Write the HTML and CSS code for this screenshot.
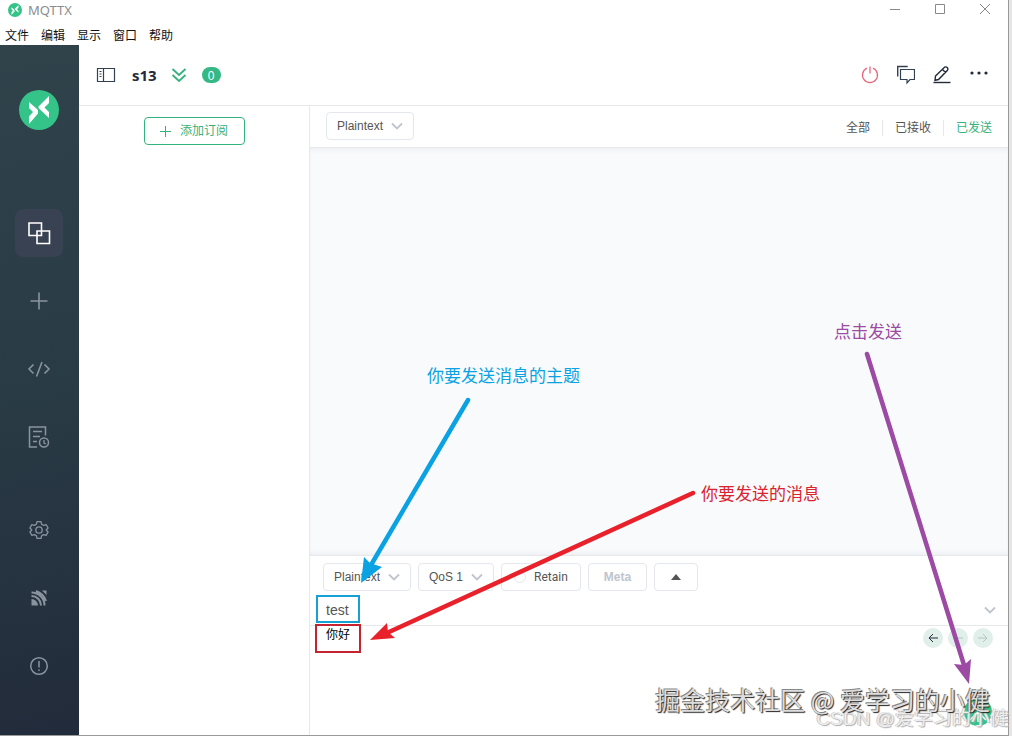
FILE: index.html
```html
<!DOCTYPE html>
<html lang="zh-CN">
<head>
    <meta charset="UTF-8">
    <meta name="viewport" content="width=device-width, initial-scale=1.0">
    <title>MQTTX</title>
    <link rel="stylesheet" href="styles.css">
</head>
<body>
    <svg class="defs" aria-hidden="true">
        <symbol id="logo" viewBox="0 0 40 40">
            <circle cx="20" cy="20" r="20" fill="#34c388"/>
            <path d="M10 12l9 8v3.500L10 34v-7.500l4-4.500-4-4zM30 6v7l-4.500 4.500L30 22v6L19.500 18v-1.500z" fill="#fff"/>
        </symbol>
        <symbol id="down" viewBox="0 0 12 12">
            <path d="M1 3.500l5 5 5-5" fill="none" stroke="#c0c4cc" stroke-width="1.800"/>
        </symbol>
    </svg>

    <div class="window">
        <!-- 标题栏 -->
        <header class="titlebar">
            <svg class="titlebar-logo"><use href="#logo"/></svg>
            <span class="titlebar-name">MQTTX</span>
            <div class="titlebar-btns">
                <button type="button" aria-label="最小化"><svg width="12" height="12"><path d="M1 5.500h10"/></svg></button>
                <button type="button" aria-label="最大化"><svg width="12" height="12"><path d="M1.500 .5h9v9h-9z"/></svg></button>
                <button type="button" aria-label="关闭"><svg width="12" height="12"><path d="M1 0l10 10M11 0L1 10"/></svg></button>
            </div>
        </header>
        <nav class="menubar">
            <a href="#">文件</a>
            <a href="#">编辑</a>
            <a href="#">显示</a>
            <a href="#">窗口</a>
            <a href="#">帮助</a>
        </nav>

        <div class="app">
            <!-- 左侧导航 -->
            <aside class="sidebar">
                <svg class="sidebar-logo"><use href="#logo"/></svg>
                <a class="side-item active" href="#" aria-label="连接">
                    <svg width="24" height="24"><path d="M2 2h12.500v12.500H2zM10 10h12.500v12.500H10z" stroke-width="1.600"/></svg>
                </a>
                <a class="side-item" href="#" aria-label="新建">
                    <svg width="24" height="24"><path d="M12 3.500v17M3.500 12h17" stroke-width="1.600"/></svg>
                </a>
                <a class="side-item" href="#" aria-label="脚本">
                    <svg width="24" height="24"><path d="M6.500 7.500L2 12l4.500 4.500M17.500 7.500L22 12l-4.500 4.500M15 5L9.500 19.500" stroke-width="1.600"/></svg>
                </a>
                <a class="side-item" href="#" aria-label="日志">
                    <svg width="24" height="24"><path d="M18.500 10.500V2h-16v20H10M6 6.500h9M6 11.500h7M6 16.500h4" stroke-width="1.500"/><circle cx="17" cy="17.500" r="4.500" stroke-width="1.500"/><path d="M17 15v3l2 1" stroke-width="1.300"/></svg>
                </a>
                <div class="side-bottom">
                    <a class="side-item" href="#" aria-label="设置">
                        <svg width="24" height="24"><circle cx="12" cy="12" r="3.200" stroke-width="1.300"/><path d="M10 3.700h4l.6 2.500 2 1.200 2.500-.8 2 3.400-1.800 1.700v.6l1.800 1.700-2 3.400-2.500-.8-2 1.200-.6 2.500h-4l-.6-2.500-2-1.200-2.500.8-2-3.400 1.800-1.700v-.6L2.900 10l2-3.400 2.500.8 2-1.200z" stroke-width="1.300" stroke-linejoin="round"/></svg>
                    </a>
                    <a class="side-item" href="#" aria-label="订阅">
                        <svg width="24" height="24"><path d="M4.500 13a6.500 6.500 0 0 1 6.500 6.500H4.500zM15 4.500h4.500V9z" fill="#8a949f" stroke="none"/><path d="M4.500 10a9.500 9.500 0 0 1 9.500 9.500M4.500 6.500a13 13 0 0 1 13 13M9 5a16 16 0 0 1 10 10" stroke-width="2"/></svg>
                    </a>
                    <a class="side-item" href="#" aria-label="关于">
                        <svg width="24" height="24"><circle cx="12" cy="12" r="8.300" stroke-width="1.500"/><path d="M12 7v6.500M12 15.500v1.500" stroke-width="1.500"/></svg>
                    </a>
                </div>
            </aside>

            <main class="main">
                <div class="conn-header">
                    <button type="button" class="icon-btn" aria-label="折叠">
                        <svg width="20" height="16"><path d="M1.500 1.500h17v13h-17zM7.500 1.500v13" stroke="#333f52" stroke-width="1.200"/><path d="M3.500 4.500h2M3.500 7h2M3.500 9.500h2" stroke="#333f52"/></svg>
                    </button>
                    <h1 class="conn-name">s13</h1>
                    <button type="button" class="icon-btn" aria-label="展开">
                        <svg width="16" height="16"><path d="M1.500 2L8 8l6.500-6M1.500 8L8 14l6.500-6" stroke="#34b27d" stroke-width="1.800"/></svg>
                    </button>
                    <span class="badge">0</span>
                    <div class="conn-tools">
                        <button type="button" class="icon-btn" aria-label="断开">
                            <svg width="18" height="18"><path d="M6 2.200a7.500 7.500 0 1 0 6 0M9 .5v7" stroke="#e5687d" stroke-width="1.300"/></svg>
                        </button>
                        <button type="button" class="icon-btn" aria-label="消息">
                            <svg width="18" height="20"><path d="M.7 11.500v-10h10" stroke="#333f52" stroke-width="1.400"/><path d="M3.500 4.500h14v10H13l-3 3.500v-3.500H3.500z" stroke="#333f52" stroke-width="1.200"/></svg>
                        </button>
                        <button type="button" class="icon-btn" aria-label="编辑">
                            <svg width="18" height="18"><path d="M2.500 10L11.500 1.200q1.500-.8 2.700.3 1.200 1.200.3 2.700L5.500 13.500l-3.500.8zM9.500 3.500l3 3" stroke="#222b3a" stroke-width="1.400"/><path d="M.5 16.500h17" stroke="#222b3a" stroke-width="1.400"/></svg>
                        </button>
                        <button type="button" class="icon-btn" aria-label="更多">
                            <svg width="20" height="18"><g fill="#222b3a" stroke="none"><circle cx="3" cy="7" r="1.600"/><circle cx="10" cy="7" r="1.600"/><circle cx="17" cy="7" r="1.600"/></g></svg>
                        </button>
                    </div>
                </div>

                <div class="conn-body">
                    <section class="subs">
                        <button type="button" class="add-sub">
                            <svg width="11" height="11"><path d="M5.500 0v11M0 5.500h11" stroke="#34b27d"/></svg>
                            添加订阅
                        </button>
                    </section>

                    <section class="chat">
                        <div class="filter-bar">
                            <div class="select">
                                <select aria-label="接收格式"><option>Plaintext</option></select>
                                <svg><use href="#down"/></svg>
                            </div>
                            <div class="tabs">
                                <a href="#">全部</a>
                                <a href="#">已接收</a>
                                <a class="active" href="#">已发送</a>
                            </div>
                        </div>

                        <div class="messages"></div>

                        <form class="publish">
                            <div class="publish-opts">
                                <div class="select">
                                    <select aria-label="发送格式"><option>Plaintext</option></select>
                                    <svg><use href="#down"/></svg>
                                </div>
                                <div class="select select-qos">
                                    <select aria-label="QoS"><option>QoS 1</option></select>
                                    <svg><use href="#down"/></svg>
                                </div>
                                <label class="retain"><input type="checkbox">Retain</label>
                                <button type="button" class="opt-btn meta" disabled>Meta</button>
                                <button type="button" class="opt-btn fold" aria-label="收起"><svg width="10" height="6"><path d="M0 6l5-6 5 6z" fill="#555" stroke="none"/></svg></button>
                            </div>
                            <div class="topic">
                                <input type="text" value="test" aria-label="Topic">
                                <svg><use href="#down"/></svg>
                            </div>
                            <div class="editor">
                                <textarea aria-label="消息内容">你好</textarea>
                                <div class="history">
                                    <button type="button" aria-label="上一条"><svg width="10" height="10"><path d="M10 5H1M5 1L1 5l4 4"/></svg></button>
                                    <button type="button" aria-label="清除" disabled><svg width="10" height="10"><path d="M0 5h10"/></svg></button>
                                    <button type="button" aria-label="下一条" disabled><svg width="10" height="10"><path d="M0 5h9M5 1l4 4-4 4"/></svg></button>
                                </div>
                                <button type="button" class="send" aria-label="发送">
                                    <svg width="28" height="28"><path d="M14 4v20M14 14L6 22M14 14l8 8" stroke="#fff" stroke-width="1.500"/></svg>
                                </button>
                            </div>
                        </form>
                    </section>
                </div>
            </main>
        </div>
    </div>

    <!-- 标注 -->
    <div class="notes">
        <svg class="arrows" width="1012" height="736">
            <g fill="none" stroke-width="4.500" stroke-linecap="round">
                <path d="M468 400L371 565" stroke="#0aa2e2"/>
                <path d="M693 493L389 632" stroke="#e8212b"/>
                <path d="M867 354L964 665" stroke="#9c4aa3"/>
            </g>
            <path d="M361 583l3-26 6 6 12 4z" fill="#0aa2e2"/>
            <path d="M370 640l17-17 1 9 7 6z" fill="#e8212b"/>
            <path d="M969 684l-15-20 10 1 7-6z" fill="#9c4aa3"/>
            <rect x="317" y="596" width="42" height="26" fill="none" stroke="#189fd4" stroke-width="2"/>
            <rect x="316" y="625" width="44" height="27" fill="none" stroke="#c4242f" stroke-width="2"/>
        </svg>
        <p class="note note-topic">你要发送消息的主题</p>
        <p class="note note-msg">你要发送的消息</p>
        <p class="note note-send">点击发送</p>
        <p class="mark mark-csdn">CSDN @爱学习的小健</p>
        <p class="mark mark-juejin">掘金技术社区 @ 爱学习的小健</p>
    </div>
</body>
</html>
```
FILE: styles.css
```css
*{
    margin: 0;
    padding: 0;
    box-sizing: border-box;
}
body{
    position: relative;
    display: flex;
    min-height: 100vh;
    padding-right: 3px;
    background-color: #e6e6e6;
    font: 12px/16px "Liberation Sans", "Noto Sans CJK SC", sans-serif;
    color: #555;
}
a{
    color: inherit;
    text-decoration: none;
}
button,input,select,textarea{
    font: inherit;
    color: inherit;
    border: none;
    background: none;
    outline: none;
}
svg{
    display: block;
    fill: none;
}
.defs{
    position: absolute;
    width: 0;
    height: 0;
}

/*窗口*/
.window{
    flex: 1;
    display: flex;
    flex-direction: column;
    background-color: #fff;
    border-right: 1px solid #999;
    border-bottom: 1px solid #999;
}
.titlebar{
    display: flex;
    align-items: center;
    height: 19px;
    padding: 0 17px 0 8px;
}
.titlebar-logo{
    width: 14px;
    height: 14px;
    margin-right: 6px;
}
.titlebar-name{
    font-family: "Noto Sans", sans-serif;
    font-size: 13px;
    color: #8c8c8c;
}
.titlebar-btns{
    display: flex;
    gap: 33px;
    margin-left: auto;
}
.titlebar-btns path{
    stroke: #888;
}
.menubar{
    display: flex;
    gap: 12px;
    height: 26px;
    padding: 9px 5px;
    color: #111;
}
.app{
    flex: 1;
    display: flex;
}

/*左侧导航*/
.sidebar{
    display: flex;
    flex-direction: column;
    align-items: center;
    gap: 20px;
    width: 79px;
    padding: 45px 1px 45px 0;
    background: linear-gradient(170deg, #30424a 0%, #293b45 50%, #222b3b 100%);
}
.sidebar-logo{
    width: 40px;
    height: 40px;
    margin-bottom: 59px;
}
.side-item{
    display: flex;
    align-items: center;
    justify-content: center;
    width: 48px;
    height: 48px;
    border-radius: 8px;
    stroke: #8a949f;
}
.side-item.active{
    background-color: #384252;
    stroke: #fff;
}
.side-bottom{
    display: flex;
    flex-direction: column;
    gap: 20px;
    margin-top: auto;
}

/*连接头部*/
.main{
    flex: 1;
    display: flex;
    flex-direction: column;
    min-width: 0;
}
.conn-header{
    display: flex;
    align-items: center;
    height: 61px;
    padding: 0 19px 0 17px;
    border-bottom: 1px solid #e6e8eb;
}
.conn-name{
    margin: 0 14px 0 16px;
    font: bold 15px/20px "Open Sans", sans-serif;
    color: #222b3a;
}
.badge{
    width: 19px;
    height: 16px;
    margin-left: 15px;
    border-radius: 8px;
    background-color: #34b886;
    color: #fff;
    line-height: 18px;
    text-align: center;
}
.conn-tools{
    display: flex;
    align-items: center;
    gap: 18px;
    margin-left: auto;
}
.conn-body{
    flex: 1;
    display: flex;
}

/*订阅列表*/
.subs{
    width: 231px;
    padding: 11px 0;
    border-right: 1px solid #e6e8eb;
}
.add-sub{
    display: flex;
    align-items: center;
    justify-content: center;
    gap: 9px;
    width: 101px;
    height: 28px;
    margin: 0 auto;
    border: 1px solid #34b27d;
    border-radius: 4px;
    color: #34b27d;
}

/*消息区*/
.chat{
    flex: 1;
    display: flex;
    flex-direction: column;
    min-width: 0;
}
.filter-bar{
    display: flex;
    align-items: center;
    justify-content: space-between;
    height: 42px;
    padding: 0 16px 2px;
    border-bottom: 1px solid #e6e8eb;
}
.select{
    position: relative;
    width: 88px;
    height: 28px;
}
.select-qos{
    width: 76px;
}
.select select{
    width: 100%;
    height: 100%;
    padding-left: 10px;
    border: 1px solid #e4e7ed;
    border-radius: 4px;
    background-color: #fff;
    appearance: none;
}
.select svg{
    position: absolute;
    top: 8px;
    right: 11px;
    width: 12px;
    height: 12px;
    pointer-events: none;
}
.tabs{
    display: flex;
    padding-top: 4px;
}
.tabs a{
    padding: 0 12px;
    border-left: 1px solid #e6e8eb;
}
.tabs a:first-child{
    border-left: none;
}
.tabs a:last-child{
    padding-right: 0;
}
.tabs .active{
    color: #34b27d;
}
.messages{
    flex: 1;
    background-color: #f9fafc;
    box-shadow: inset 0 4px 4px -2px #eceff2, inset 0 -4px 4px -2px #eceff2;
}

/*发送区*/
.publish{
    border-top: 1px solid #e6e8eb;
}
.publish-opts{
    display: flex;
    gap: 7px;
    padding: 7px 13px 3px;
}
.retain,.opt-btn{
    display: flex;
    align-items: center;
    height: 28px;
    border: 1px solid #e4e7ed;
    border-radius: 4px;
}
.retain{
    gap: 8px;
    width: 80px;
    padding-left: 12px;
    font-family: Roboto, sans-serif;
}
.retain input{
    width: 12px;
    height: 12px;
    border: 1px solid #e4e7ed;
    border-radius: 50%;
    appearance: none;
}
.opt-btn{
    justify-content: center;
    width: 44px;
}
.meta{
    width: 59px;
    color: #c0c4cc;
    font-weight: bold;
}
.topic{
    display: flex;
    align-items: center;
    height: 32px;
    padding: 0 12px 0 16px;
    border-bottom: 1px solid #e6e8eb;
}
.topic input{
    flex: 1;
    min-width: 0;
    font-size: 14px;
}
.topic svg{
    width: 12px;
    height: 12px;
}
.editor{
    position: relative;
    display: flex;
    height: 109px;
    padding: 1px 15px 0 16px;
}
.editor textarea{
    flex: 1;
    height: 100%;
    color: #000;
    resize: none;
}
.history{
    display: flex;
    gap: 5px;
    padding-top: 1px;
}
.history button{
    display: flex;
    align-items: center;
    justify-content: center;
    width: 20px;
    height: 20px;
    border-radius: 50%;
    background-color: #e0efea;
    stroke: #222b3a;
}
.history button:disabled{
    stroke: #b4c6c0;
}
.send{
    position: absolute;
    right: 16px;
    bottom: 9px;
    border-radius: 50%;
    background-color: #34c388;
}

/*标注,盖在页面上面*/
.notes{
    position: absolute;
    inset: 0;
    overflow: hidden;
    pointer-events: none;
}
.note,.mark{
    position: absolute;
    white-space: nowrap;
}
.note{
    font: 17px/24px "Noto Sans CJK SC", sans-serif;
}
.note-topic{
    left: 427px;
    top: 363px;
    color: #0aa2e2;
}
.note-msg{
    left: 701px;
    top: 481px;
    color: #d9232e;
}
.note-send{
    left: 834px;
    top: 319px;
    color: #9c4aa3;
}
.mark-juejin{
    right: 22px;
    bottom: 19px;
    font: 25px/36px "Noto Sans CJK SC", sans-serif;
    color: #ddd;
    text-shadow: 1px 1px 1px #222, -1px -1px 0 #888;
}
.mark-csdn{
    right: 3px;
    bottom: 5px;
    font-size: 19px;
    line-height: 24px;
    color: #eee;
    text-shadow: 1px 1px 1px #aaa, -1px 0 0 #ccc;
}
```
